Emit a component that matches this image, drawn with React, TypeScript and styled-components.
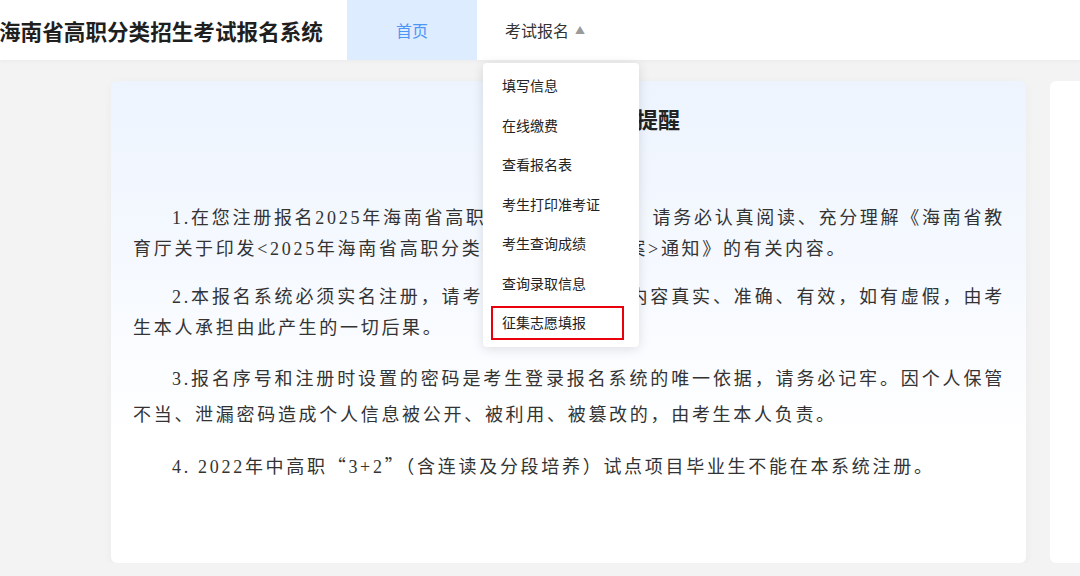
import React from 'react';
import styled, { createGlobalStyle } from 'styled-components';

const GlobalStyle = createGlobalStyle`
  html, body {
    margin: 0;
    padding: 0;
    background: #f3f3f3;
    font-family: "Noto Sans CJK SC", "Noto Sans", sans-serif;
    overflow: hidden;
  }
`;

const Header = styled.header`
  height: 60px;
  background: #fff;
  display: flex;
  align-items: center;
  box-shadow: 0 1px 4px rgba(0, 0, 0, 0.04);
  position: relative;
  z-index: 5;
`;

const SiteTitle = styled.h1`
  margin: 0 0 0 -1px;
  width: 348px;
  font-size: 21.6px;
  font-weight: 700;
  color: #1f1f1f;
  white-space: nowrap;
`;

const Nav = styled.nav`
  display: flex;
  height: 100%;
`;

const NavItem = styled.div<{ $active?: boolean }>`
  position: relative;
  width: 130px;
  height: 100%;
  display: flex;
  align-items: center;
  justify-content: center;
  gap: 6px;
  padding-left: ${p => (p.$active ? 0 : 6)}px;
  box-sizing: border-box;
  font-size: 16px;
  color: ${p => (p.$active ? '#4d95f5' : '#333')};
  background: ${p => (p.$active ? '#deecff' : 'transparent')};
`;

const Caret = styled.span`
  font-size: 10px;
  color: #9a9a9a;
  margin-top: -2px;
`;

const Menu = styled.ul`
  position: absolute;
  top: 63px;
  left: 6px;
  width: 156px;
  margin: 0;
  padding: 3px 0 4px;
  list-style: none;
  background: #fff;
  border-radius: 4px;
  box-shadow: 0 2px 12px rgba(0, 0, 0, 0.12);
  z-index: 10;
`;

const MenuItem = styled.li<{ $marked?: boolean }>`
  position: relative;
  height: 39.5px;
  line-height: 39.5px;
  padding-left: 19px;
  font-size: 14px;
  color: #222;
  text-align: left;

  &::after {
    content: '';
    display: ${p => (p.$marked ? 'block' : 'none')};
    position: absolute;
    left: 8px;
    right: 15px;
    top: 3px;
    bottom: 3px;
    border: 2px solid #e8000b;
  }
`;

const Main = styled.main`
  display: flex;
  gap: 24px;
  padding: 21px 0 0 111px;
`;

const Card = styled.section`
  flex: 0 0 915px;
  height: 482px;
  box-sizing: border-box;
  padding: 22px 21px 0 22px;
  border-radius: 6px;
  background: linear-gradient(180deg, #edf4fe 0%, #f7faff 45%, #ffffff 75%);
  box-shadow: 0 2px 10px rgba(0, 0, 0, 0.04);
`;

const SideCard = styled.aside`
  flex: 1;
  height: 482px;
  border-radius: 6px 0 0 6px;
  background: #fff;
`;

const CardTitle = styled.h2`
  margin: 0 0 70px;
  padding-left: 46px;
  line-height: 30px;
  font-size: 22px;
  font-weight: 700;
  color: #222;
  text-align: center;
`;

const Para = styled.p<{ $lh?: number }>`
  margin: 0 0 17px;
  text-indent: 39px;
  font-family: "Liberation Serif", "Noto Sans CJK SC", serif;
  font-size: 18px;
  letter-spacing: 2.7px;
  line-height: ${p => p.$lh ?? 31}px;
  color: #333;
  text-align: justify;
`;

const Wide = styled.span`
  font-family: "Noto Sans CJK SC", sans-serif;
`;

const menuItems = [
  '填写信息',
  '在线缴费',
  '查看报名表',
  '考生打印准考证',
  '考生查询成绩',
  '查询录取信息',
  '征集志愿填报',
];

export default function App() {
  return (
    <>
      <GlobalStyle />
      <Header>
        <SiteTitle>海南省高职分类招生考试报名系统</SiteTitle>
        <Nav>
          <NavItem $active>首页</NavItem>
          <NavItem>
            考试报名<Caret>▲</Caret>
            <Menu>
              {menuItems.map((m, i) => (
                <MenuItem key={m} $marked={i === menuItems.length - 1}>{m}</MenuItem>
              ))}
            </Menu>
          </NavItem>
        </Nav>
      </Header>
      <Main>
        <Card>
          <CardTitle>考生注册报名提醒</CardTitle>
          <Para>
            1.在您注册报名2025年海南省高职分类招生考试前，请务必认真阅读、充分理解《海南省教育厅关于印发&lt;2025年海南省高职分类招生考试录取方案&gt;通知》的有关内容。
          </Para>
          <Para>
            2.本报名系统必须实名注册，请考生确保所填信息内容真实、准确、有效，如有虚假，由考生本人承担由此产生的一切后果。
          </Para>
          <Para $lh={36}>
            3.报名序号和注册时设置的密码是考生登录报名系统的唯一依据，请务必记牢。因个人保管不当、泄漏密码造成个人信息被公开、被利用、被篡改的，由考生本人负责。
          </Para>
          <Para>
            4. 2022年中高职<Wide>“</Wide>3+2<Wide>”（</Wide>含连读及分段培养）试点项目毕业生不能在本系统注册。
          </Para>
        </Card>
        <SideCard />
      </Main>
    </>
  );
}
